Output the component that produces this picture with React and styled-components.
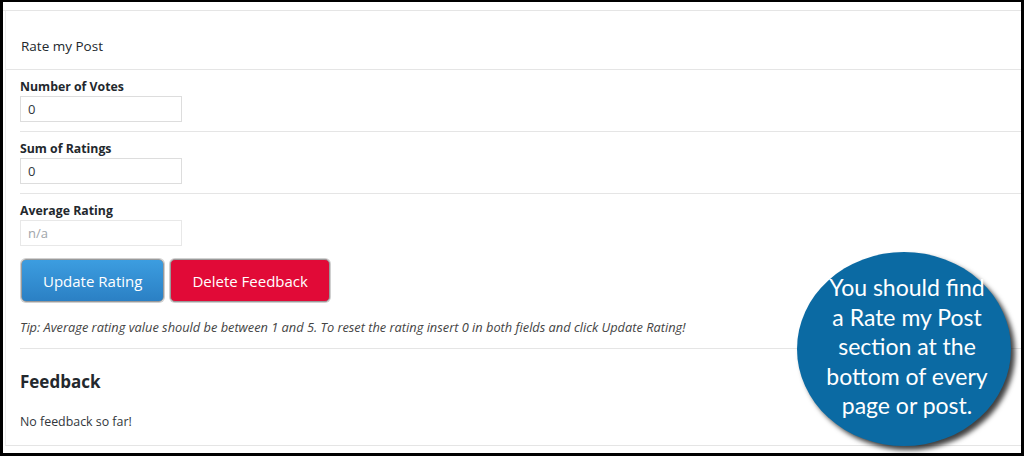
import React from 'react';
import styled, { createGlobalStyle } from 'styled-components';

const GlobalStyle = createGlobalStyle`
  html, body {
    margin: 0;
    padding: 0;
    background: #000;
  }
  * {
    box-sizing: border-box;
  }
`;

const Frame = styled.div`
  position: relative;
  width: 1024px;
  height: 456px;
  border-style: solid;
  border-color: #000;
  border-width: 2px 3px 3px 3px;
  background: #fff;
  overflow: hidden;
  font-family: 'Open Sans', 'Noto Sans', sans-serif;
  color: #23282d;
`;

const TopStrip = styled.div`
  height: 9px;
  border-bottom: 1px solid #e5e5e5;
`;

const Postbox = styled.div`
  margin-left: 2px;
  border-left: 1px solid #eeeeee;
  border-bottom: 1px solid #e5e5e5;
  height: 435px;
`;

const Header = styled.div`
  height: 59px;
  display: flex;
  align-items: center;
  padding: 11px 0 0 15px;
  border-bottom: 1px solid #e5e5e5;
  font-size: 13.5px;
`;

const Inside = styled.div`
  padding-left: 14px;
`;

const Field = styled.div`
  padding: 8px 0 ${(p) => (p.$last ? '0' : '9px')};
  border-bottom: ${(p) => (p.$last ? 'none' : '1px solid #e5e5e5')};
`;

const Label = styled.label`
  display: block;
  font-size: 12.3px;
  font-weight: 700;
  line-height: 18px;
  color: #23282d;
`;

const Input = styled.input`
  display: block;
  width: 162px;
  height: 26px;
  margin: 0;
  padding: 0 7px;
  border: 1px solid ${(p) => (p.disabled ? '#e8e8e8' : '#dddddd')};
  background: #fff;
  font-family: inherit;
  font-size: 13px;
  color: #32373c;
  outline: none;

  &::placeholder {
    color: #a0a5aa;
  }
`;

const Buttons = styled.div`
  display: flex;
  gap: 6px;
  margin-top: 13px;
  padding-left: 1px;
`;

const Button = styled.button`
  height: 43px;
  padding: 0 21px;
  border: 1px solid #9a9a9a;
  border-radius: 5px;
  box-shadow: 0 0 0 1px #d0d0d0;
  background: ${(p) =>
    p.$danger ? '#e10a37' : 'linear-gradient(#3c9de0, #2b80c4)'};
  color: #fff;
  font-family: inherit;
  font-size: 15px;
  cursor: pointer;
`;

const Tip = styled.p`
  margin: 0;
  padding: 16px 0 12px;
  font-size: 12.8px;
  line-height: 18px;
  font-style: italic;
  color: #444;
  border-bottom: 1px solid #e5e5e5;
`;

const Heading = styled.h2`
  margin: 0;
  padding: 22px 0 0;
  font-size: 17px;
  font-weight: 700;
  line-height: 22px;
  color: #23282d;
`;

const Note = styled.p`
  margin: 0;
  padding-top: 20px;
  font-size: 12.4px;
  line-height: 17px;
  color: #32373c;
`;

const Bubble = styled.div`
  position: absolute;
  left: 794px;
  top: 250px;
  width: 214px;
  height: 194px;
  border-radius: 50%;
  background: #0b6aa3;
  box-shadow: 4px 4px 5px rgba(0, 0, 0, 0.75);
  display: flex;
  align-items: center;
  justify-content: center;
  padding: 0 0 4px 6px;
  text-align: center;
  font-family: 'Lato', 'Open Sans', sans-serif;
  font-size: 23px;
  line-height: 29.5px;
  color: #fff;
`;

export default function App() {
  return (
    <Frame>
      <GlobalStyle />
      <TopStrip />
      <Postbox>
        <Header>Rate my Post</Header>
        <Inside>
          <Field>
            <Label>Number of Votes</Label>
            <Input defaultValue="0" />
          </Field>
          <Field>
            <Label>Sum of Ratings</Label>
            <Input defaultValue="0" />
          </Field>
          <Field $last>
            <Label>Average Rating</Label>
            <Input placeholder="n/a" disabled />
          </Field>
          <Buttons>
            <Button>Update Rating</Button>
            <Button $danger>Delete Feedback</Button>
          </Buttons>
          <Tip>
            Tip: Average rating value should be between 1 and 5. To reset the rating insert 0 in
            both fields and click Update Rating!
          </Tip>
          <Heading>Feedback</Heading>
          <Note>No feedback so far!</Note>
        </Inside>
      </Postbox>
      <Bubble>
        You should find
        <br />
        a Rate my Post
        <br />
        section at the
        <br />
        bottom of every
        <br />
        page or post.
      </Bubble>
    </Frame>
  );
}
